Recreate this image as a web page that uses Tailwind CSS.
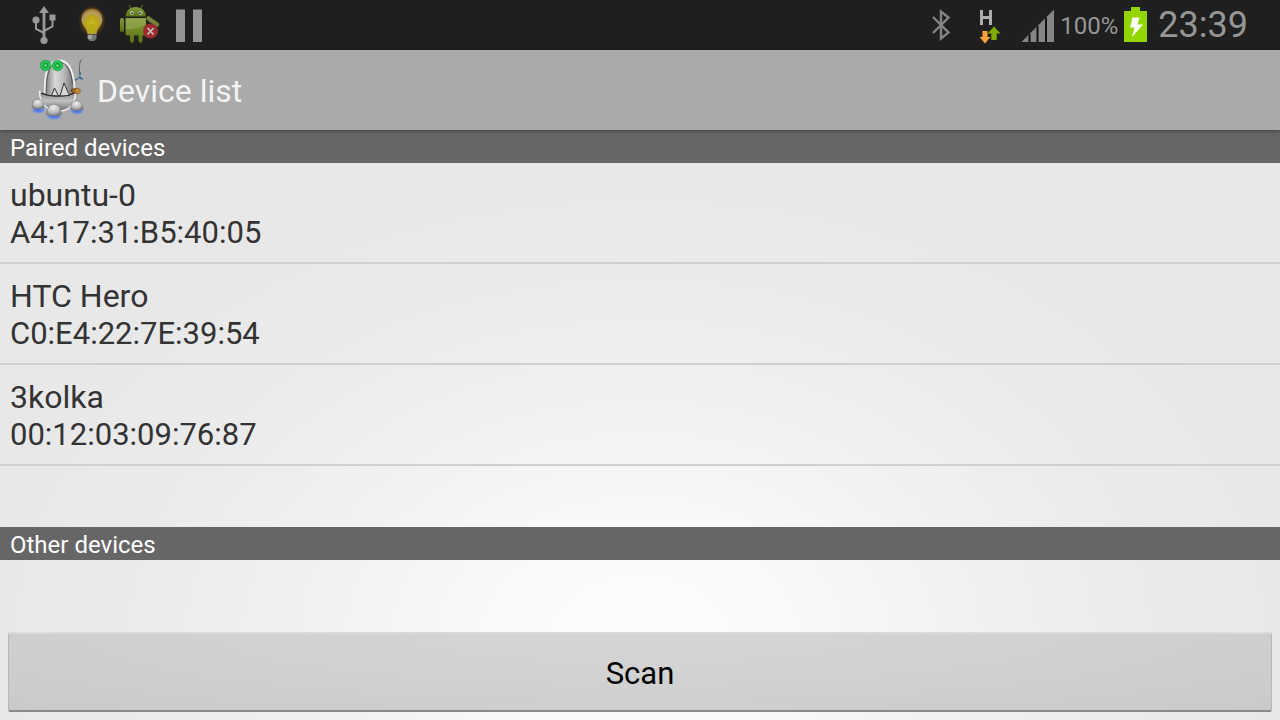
<!DOCTYPE html>
<html lang="en">
<head>
    <meta charset="UTF-8">
    <meta name="viewport" content="width=device-width, initial-scale=1.0">
    <title>Device list</title>
    <script src="https://cdn.jsdelivr.net/npm/@tailwindcss/browser@4"></script>
</head>
<body class="min-h-screen flex flex-col font-['Roboto',sans-serif] text-[#333333] bg-[radial-gradient(ellipse_680px_480px_at_50%_640px,#fdfdfd,#fafafa_20%,#f1f1f1_50%,#ebebeb_75%,#e8e8e8)]">

    <!-- Status bar -->
    <div class="h-[50px] shrink-0 flex items-center justify-between pl-7 pr-8 bg-[#1f1f1f] text-[#969696]">
        <div class="flex items-center">
            <!-- USB -->
            <svg class="w-10 h-[50px]" viewBox="28 0 40 50" aria-hidden="true">
                <g fill="#999999">
                    <path d="M44 6l5 7h-3.600v27h-2.800V13H39z"/>
                    <circle cx="44" cy="40.500" r="3.600"/>
                    <circle cx="36" cy="20" r="3.600"/>
                    <path d="M49.500 14.500h6v6h-6z"/>
                </g>
                <path d="M36 20v9l8 4M52.500 20v6.500L44 31" fill="none" stroke="#999999" stroke-width="2"/>
            </svg>
            <!-- Light bulb -->
            <svg class="w-12 h-[50px]" viewBox="68 0 48 50" aria-hidden="true">
                <defs>
                    <radialGradient id="bulb" cx=".5" cy=".6" r=".6">
                        <stop offset="0" stop-color="#c8c01e"/>
                        <stop offset=".5" stop-color="#bca21c"/>
                        <stop offset=".8" stop-color="#b09a68"/>
                        <stop offset="1" stop-color="#8a5c14"/>
                    </radialGradient>
                    <radialGradient id="glow">
                        <stop offset=".65" stop-color="#9a6810" stop-opacity=".6"/>
                        <stop offset="1" stop-color="#5e3c08" stop-opacity="0"/>
                    </radialGradient>
                </defs>
                <ellipse cx="92" cy="21" rx="14" ry="16" fill="url(#glow)"/>
                <path d="M92 8.500c-6.500 0-10.500 4.500-10.500 10.500 0 6 5 8 6 15h9c1-7 6-9 6-15 0-6-4-10.500-10.500-10.500z" fill="url(#bulb)"/>
                <path d="M88.500 23l2 2 1.500-2 1.500 2 2-2-2 11h-3z" fill="#b8ac12"/>
                <path d="M87.500 34.500h9v4l-2.500 2.500h-4l-2.500-2.500z" fill="#777777"/>
                <path d="M88 35h4v4h-4z" fill="#a2a2a2"/>
            </svg>
            <!-- Android with error badge -->
            <svg class="w-[46px] h-[50px]" viewBox="116 0 46 50" aria-hidden="true">
                <defs>
                    <linearGradient id="droid" x1="0" y1="0" x2="0" y2="1">
                        <stop offset="0" stop-color="#869d3f"/>
                        <stop offset="1" stop-color="#58700d"/>
                    </linearGradient>
                </defs>
                <path d="M131 9l-2-4M140.500 9l2-4" stroke="#65792a" stroke-width="1"/>
                <path d="M125.500 16.500c.5-6 4.500-9.500 10.200-9.500s9.800 3.500 10.300 9.500z" fill="url(#droid)"/>
                <circle cx="132" cy="13" r="2" fill="#b8bdad"/>
                <circle cx="140.500" cy="13" r="2" fill="#b8bdad"/>
                <circle cx="132.300" cy="13.300" r="1" fill="#38402a"/>
                <circle cx="140.200" cy="13.300" r="1" fill="#38402a"/>
                <path d="M125.500 18H146v15.500q0 2-2 2h-1.500V41q-2 4-4 0v-5.500H134V41q-2 4-4 0v-5.500h-2.500q-2 0-2-2z" fill="url(#droid)"/>
                <path d="M126 18.500h19.500v6q-7 4.500-19.500 5z" fill="#9fb160" opacity=".45"/>
                <rect x="120" y="18" width="4" height="14" rx="2" fill="url(#droid)"/>
                <path d="M148.500 18.500l8.500 6" stroke="#718437" stroke-width="4.500" stroke-linecap="round"/>
                <circle cx="150.500" cy="31" r="7.500" fill="#9c2a2c"/>
                <path d="M147.500 28l6 6.500M153.500 28l-6 6.500" stroke="#c4bcbc" stroke-width="1.800"/>
            </svg>
            <!-- Pause -->
            <svg class="w-10 h-[50px]" viewBox="162 0 40 50" aria-hidden="true">
                <path d="M176 9.500h9v32.500h-9zM193 9.500h9v32.500h-9z" fill="#949494"/>
            </svg>
        </div>
        <div class="flex items-center">
            <!-- Bluetooth -->
            <svg class="w-8 h-[50px]" viewBox="926 0 32 50" aria-hidden="true">
                <path d="M933 17L948.500 32.500 941 38.500V11.500l7.500 6L933 33" fill="none" stroke="#848484" stroke-width="2.400"/>
            </svg>
            <!-- Mobile data -->
            <svg class="w-[60px] h-[50px]" viewBox="958 0 60 50" aria-hidden="true">
                <path d="M981.500 10v15M990.500 10v15M981.500 17.500h9" fill="none" stroke="#adadad" stroke-width="3"/>
                <path d="M994 26.500l6.500 7h-3.800V40h-5.400v-6.500h-3.800z" fill="#7eac00"/>
                <path d="M982.500 31h5v6h3l-5.500 6.500-5.500-6.500h3z" fill="#ffa03c"/>
            </svg>
            <!-- Signal strength -->
            <svg class="w-[42px] h-[50px]" viewBox="1018 0 42 50" aria-hidden="true">
                <path d="M1021.500 42L1054 9.500V42z" fill="#858585"/>
                <path d="M1029.500 34v8M1037.500 26v16M1046 17.500V42" stroke="#111111" stroke-width="2"/>
            </svg>
            <span class="w-16 pt-0.5 text-2xl leading-[50px]">100%</span>
            <!-- Battery, charging -->
            <svg class="w-[34px] h-[50px]" viewBox="1124 0 34 50" aria-hidden="true">
                <path d="M1131 7h9v4h7v31h-23V11h7z" fill="#92d500"/>
                <path d="M1132.500 17.500h7l-2 7h5.500L1132 37l2.500-9.500h-4.500z" fill="#ffffff"/>
            </svg>
            <span class="text-4xl leading-[50px]">23:39</span>
        </div>
    </div>

    <!-- Action bar -->
    <header class="relative h-20 shrink-0 flex items-center gap-1 pl-6 bg-[#aaaaaa] shadow-[0_1px_4px_rgba(0,0,0,0.4)]">
        <svg class="w-[69px] h-20" viewBox="24 50 69 80" aria-hidden="true">
            <defs>
                <linearGradient id="shell">
                    <stop offset="0" stop-color="#777777"/>
                    <stop offset=".35" stop-color="#dadada"/>
                    <stop offset=".65" stop-color="#b8b8b8"/>
                    <stop offset="1" stop-color="#6c6c6c"/>
                </linearGradient>
                <linearGradient id="jaw" x1="0" y1="0" x2="0" y2="1">
                    <stop offset="0" stop-color="#808080"/>
                    <stop offset=".5" stop-color="#c0c0c0"/>
                    <stop offset="1" stop-color="#707070"/>
                </linearGradient>
                <radialGradient id="foot" cx=".45" cy=".3" r=".8">
                    <stop offset="0" stop-color="#ececec"/>
                    <stop offset=".5" stop-color="#bebebe"/>
                    <stop offset="1" stop-color="#666666"/>
                </radialGradient>
                <radialGradient id="eye">
                    <stop offset="0" stop-color="#86ff9f"/>
                    <stop offset=".3" stop-color="#13983a"/>
                    <stop offset=".6" stop-color="#2fdb5d"/>
                    <stop offset=".7" stop-color="#1a9a3e"/>
                    <stop offset="1" stop-color="#20c04c" stop-opacity="0"/>
                </radialGradient>
                <radialGradient id="jet">
                    <stop offset="0" stop-color="#4169f0"/>
                    <stop offset=".6" stop-color="#5f84ea" stop-opacity=".8"/>
                    <stop offset="1" stop-color="#84a0e0" stop-opacity="0"/>
                </radialGradient>
            </defs>
            <path d="M82 59q-3 1-2.500 14" fill="none" stroke="#626262" stroke-width="1"/>
            <path d="M80 72v5l-5 3.500M80 78l3 1" fill="none" stroke="#376296" stroke-width="1.600" stroke-dasharray="3 1"/>
            <ellipse cx="38.500" cy="110" rx="8" ry="4" fill="url(#jet)"/>
            <ellipse cx="54" cy="116" rx="9" ry="4.500" fill="url(#jet)"/>
            <ellipse cx="77" cy="111" rx="8" ry="4" fill="url(#jet)"/>
            <path d="M45 97C44 74 47 61 59 60.500c10-.5 16 11 15.500 35.500z" fill="url(#shell)" stroke="#f0f0f0" stroke-width="1.800"/>
            <path d="M46.200 95C46.200 75 49 64 58 62.200c8-.5 13 8 14.500 22" fill="none" stroke="#444444" stroke-width=".7"/>
            <path d="M39.500 91c2 4 6 3 11 4 11 2 19 0 25-4 0 12-4 20-17 20s-19-9-19-20z" fill="url(#jaw)" stroke="#eeeeee" stroke-width="1.500"/>
            <path d="M41 93c9 4 24 4 33 0" fill="none" stroke="#2b2b2b" stroke-width="1.500"/>
            <path d="M51.500 95.500l3-7.500 4 8zM60 96l4-13 5.500 12.500z" fill="#d8d8d8" stroke="#303030" stroke-width="1"/>
            <path d="M71.500 89.500l5-1v5l-5-1.500z" fill="#a06418" stroke="#654014" stroke-width="1"/>
            <circle cx="77.500" cy="91" r="2.800" fill="#c38933" stroke="#80541c" stroke-width=".6"/>
            <path d="M32 107.500q0-8.500 6-8.500 5.500 0 6 8.500-5 3-12 0z" fill="url(#foot)" stroke="#6a6a6a" stroke-width=".5"/>
            <path d="M70.500 109q0-8.500 6-8.500 6 0 6.500 8.500-5 3-12.500 0z" fill="url(#foot)" stroke="#6a6a6a" stroke-width=".5"/>
            <path d="M46.500 114q1-10 7.500-10t7.500 10q-6 4-15 0z" fill="url(#foot)" stroke="#6a6a6a" stroke-width=".5"/>
            <circle cx="45.500" cy="65.500" r="6.500" fill="url(#eye)"/>
            <circle cx="57.500" cy="65.500" r="6.500" fill="url(#eye)"/>
        </svg>
        <h1 class="pt-0.5 text-[32px] leading-10 text-[#f3f3f3]">Device list</h1>
    </header>

    <main class="grow flex flex-col">
        <h2 class="pl-2.5 pt-[3px] text-2xl leading-[30px] bg-[#666666] text-white">Paired devices</h2>
        <ul class="grow text-[32px] leading-[37px]">
            <li class="pl-2.5 pt-3.5 pb-[11px] border-b-2 border-[#d0d0d0]">
                <div>ubuntu-0</div>
                <div class="text-[31px]">A4:17:31:B5:40:05</div>
            </li>
            <li class="pl-2.5 pt-3.5 pb-[11px] border-b-2 border-[#d0d0d0]">
                <div>HTC Hero</div>
                <div class="text-[31px]">C0:E4:22:7E:39:54</div>
            </li>
            <li class="pl-2.5 pt-3.5 pb-[11px] border-b-2 border-[#d0d0d0]">
                <div>3kolka</div>
                <div class="text-[31px]">00:12:03:09:76:87</div>
            </li>
        </ul>
        <h2 class="pl-2.5 pt-[3px] text-2xl leading-[30px] bg-[#666666] text-white">Other devices</h2>
        <ul class="min-h-16"></ul>
        <div class="p-2 flex">
            <button type="button" class="grow h-20 pt-1 rounded-xs text-[31px] leading-10 text-black bg-[radial-gradient(ellipse_at_50%_0,#d5d5d5,#d2d2d2_40%,#cacaca)] border-t-2 border-b-2 border-t-[#dadada] border-b-[#8a8a8a] border-x border-x-[#b8b8b8]">Scan</button>
        </div>
    </main>
</body>
</html>
